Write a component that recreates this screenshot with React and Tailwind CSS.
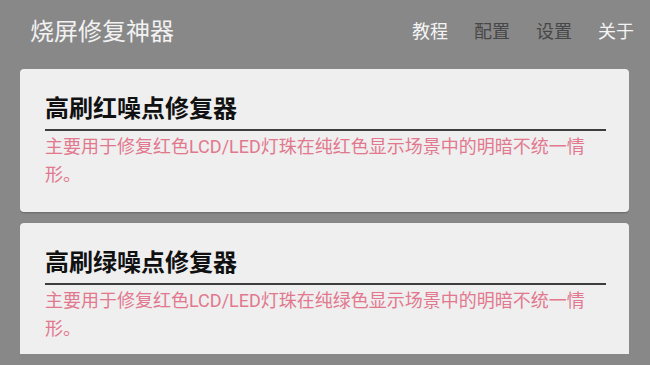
const cards = [
  {
    title: '高刷红噪点修复器',
    desc: '主要用于修复红色LCD/LED灯珠在纯红色显示场景中的明暗不统一情形。',
  },
  {
    title: '高刷绿噪点修复器',
    desc: '主要用于修复红色LCD/LED灯珠在纯绿色显示场景中的明暗不统一情形。',
  },
];

const nav = [
  { label: '教程', active: true },
  { label: '配置', active: false },
  { label: '设置', active: false },
  { label: '关于', active: true },
];

export default function App() {
  return (
    <div
      className="flex flex-col h-screen w-full bg-[#888888] overflow-hidden"
      style={{ fontFamily: 'Roboto, "Noto Sans CJK SC", sans-serif' }}
    >
      <header className="flex items-center justify-between h-[69px] shrink-0 pl-[30px] pr-[16px] pb-[6px]">
        <h1 className="text-[24px] leading-[32px] font-normal text-[#f2f2f2]">烧屏修复神器</h1>
        <nav className="flex gap-[26px]">
          {nav.map((item) => (
            <span
              key={item.label}
              className={
                item.active
                  ? 'text-[18px] leading-[24px] text-[#f4f4f4]'
                  : 'text-[18px] leading-[24px] text-[#474747]'
              }
            >
              {item.label}
            </span>
          ))}
        </nav>
      </header>

      <main className="flex-1 min-h-0 pl-[20px] pr-[21px] pb-[11px]">
        <div className="h-full overflow-hidden flex flex-col gap-[11px]">
          {cards.map((card) => (
            <section
              key={card.title}
              className="shrink-0 bg-[#efefef] rounded-[4px] shadow-[0_1px_2px_rgba(0,0,0,0.25)] pl-[25px] pr-[23px] pt-[24px] pb-[23px]"
            >
              <h2 className="text-[24px] leading-[32px] font-bold text-[#111111] pb-[4px] border-b-2 border-[#3d3d3d]">
                {card.title}
              </h2>
              <p className="mt-[2px] text-[18px] leading-[28px] text-[#e2788e]">{card.desc}</p>
            </section>
          ))}
        </div>
      </main>
    </div>
  );
}
